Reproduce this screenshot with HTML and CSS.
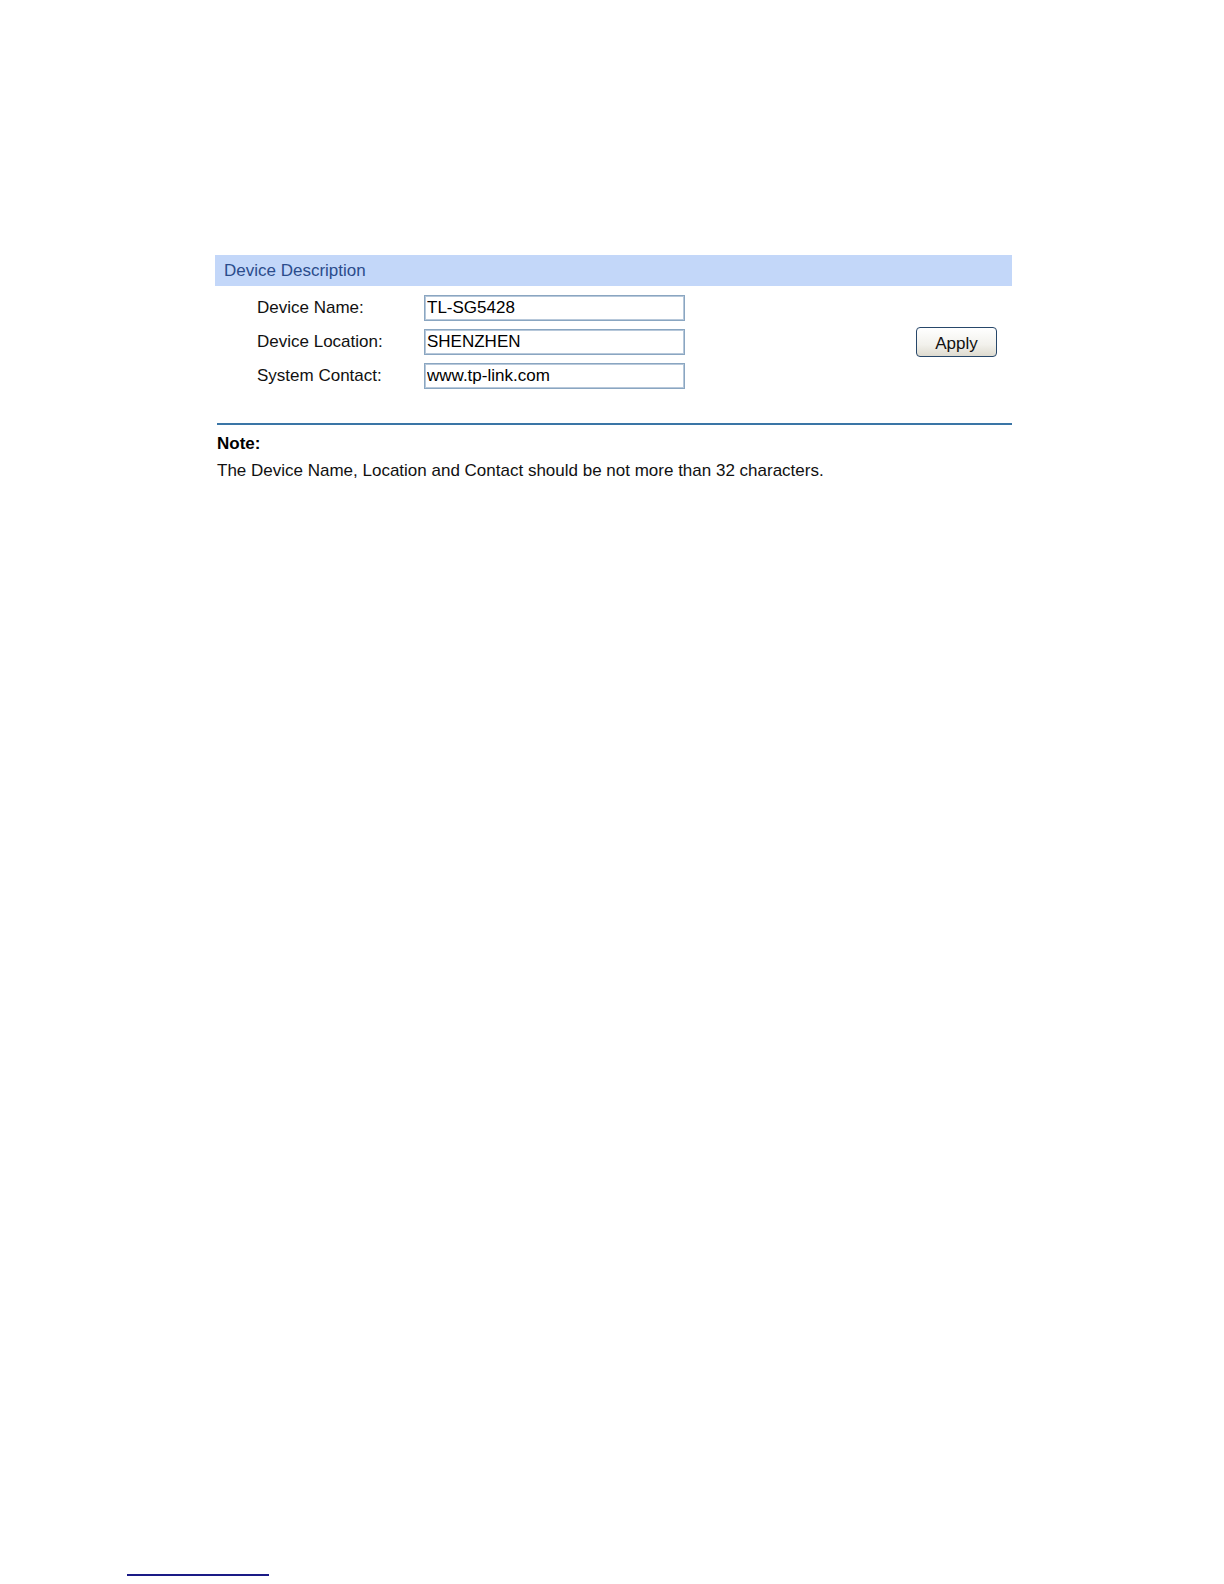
FILE: index.html
```html
<!DOCTYPE html>
<html>
<head>
<meta charset="utf-8">
<link rel="stylesheet" href="styles.css">
</head>
<body>
<div class="page">
  <div class="panel">
    <div class="panel-title">Device Description</div>
    <div class="panel-body">
      <div class="fields">
        <div class="row"><span class="label">Device Name:</span><input class="field" type="text" value="TL-SG5428"></div>
        <div class="row"><span class="label">Device Location:</span><input class="field" type="text" value="SHENZHEN"></div>
        <div class="row"><span class="label">System Contact:</span><input class="field" type="text" value="www.tp-link.com"></div>
      </div>
      <button class="apply">Apply</button>
    </div>
  </div>
  <div class="note">
    <div class="note-title">Note:</div>
    <div class="note-text">The Device Name, Location and Contact should be not more than 32 characters.</div>
  </div>
  <div class="spacer"></div>
  <div class="footnote-rule"></div>
</div>
</body>
</html>
```
FILE: styles.css
```css
html, body {
  margin: 0;
  padding: 0;
  background: #ffffff;
}
body {
  font-family: "Liberation Sans", Arial, sans-serif;
  color: #000;
}
.page {
  height: 1584px;
  display: flex;
  flex-direction: column;
  padding-top: 255px;
  box-sizing: border-box;
}
.panel {
  margin-left: 215px;
  width: 797px;
}
.panel-title {
  height: 31px;
  line-height: 31px;
  background: #c3d7f9;
  color: #2b4c8c;
  font-size: 17px;
  padding-left: 9px;
}
.panel-body {
  display: flex;
  padding: 9px 0 0 42px;
  height: 137px;
  box-sizing: border-box;
  align-items: flex-start;
}
.fields {
  display: flex;
  flex-direction: column;
  gap: 9px;
}
.row {
  display: flex;
  align-items: center;
  height: 25px;
}
.label {
  width: 167px;
  font-size: 17px;
  color: #111;
}
.field {
  width: 261px;
  height: 26px;
  box-sizing: border-box;
  border: 1px solid #8aa6c1;
  outline: 1px solid #b7c8da;
  outline-offset: -2px;
  padding: 0 0 0 2px;
  margin: 0;
  font-family: "Liberation Sans", Arial, sans-serif;
  font-size: 17px;
  color: #000;
  background: #fff;
}
.apply {
  margin-left: auto;
  margin-right: 15px;
  margin-top: 32px;
  width: 81px;
  height: 30px;
  border: 1px solid #27476a;
  border-radius: 4px;
  background: linear-gradient(#ffffff, #f2f1ec 60%, #dedbd0);
  font-family: "Liberation Sans", Arial, sans-serif;
  font-size: 17px;
  color: #111;
  padding: 4px 0 0 0;
}
.note {
  margin-left: 217px;
  width: 795px;
  border-top: 2px solid #3a75a6;
  padding-top: 10px;
}
.note-title {
  font-weight: bold;
  font-size: 17px;
  line-height: 18px;
}
.note-text {
  font-size: 17px;
  line-height: 18px;
  margin-top: 9px;
  color: #111;
}
.spacer {
  flex: 1;
}
.footnote-rule {
  margin-left: 127px;
  width: 142px;
  height: 2px;
  background: #1a1a86;
  margin-bottom: 8px;
}
```
